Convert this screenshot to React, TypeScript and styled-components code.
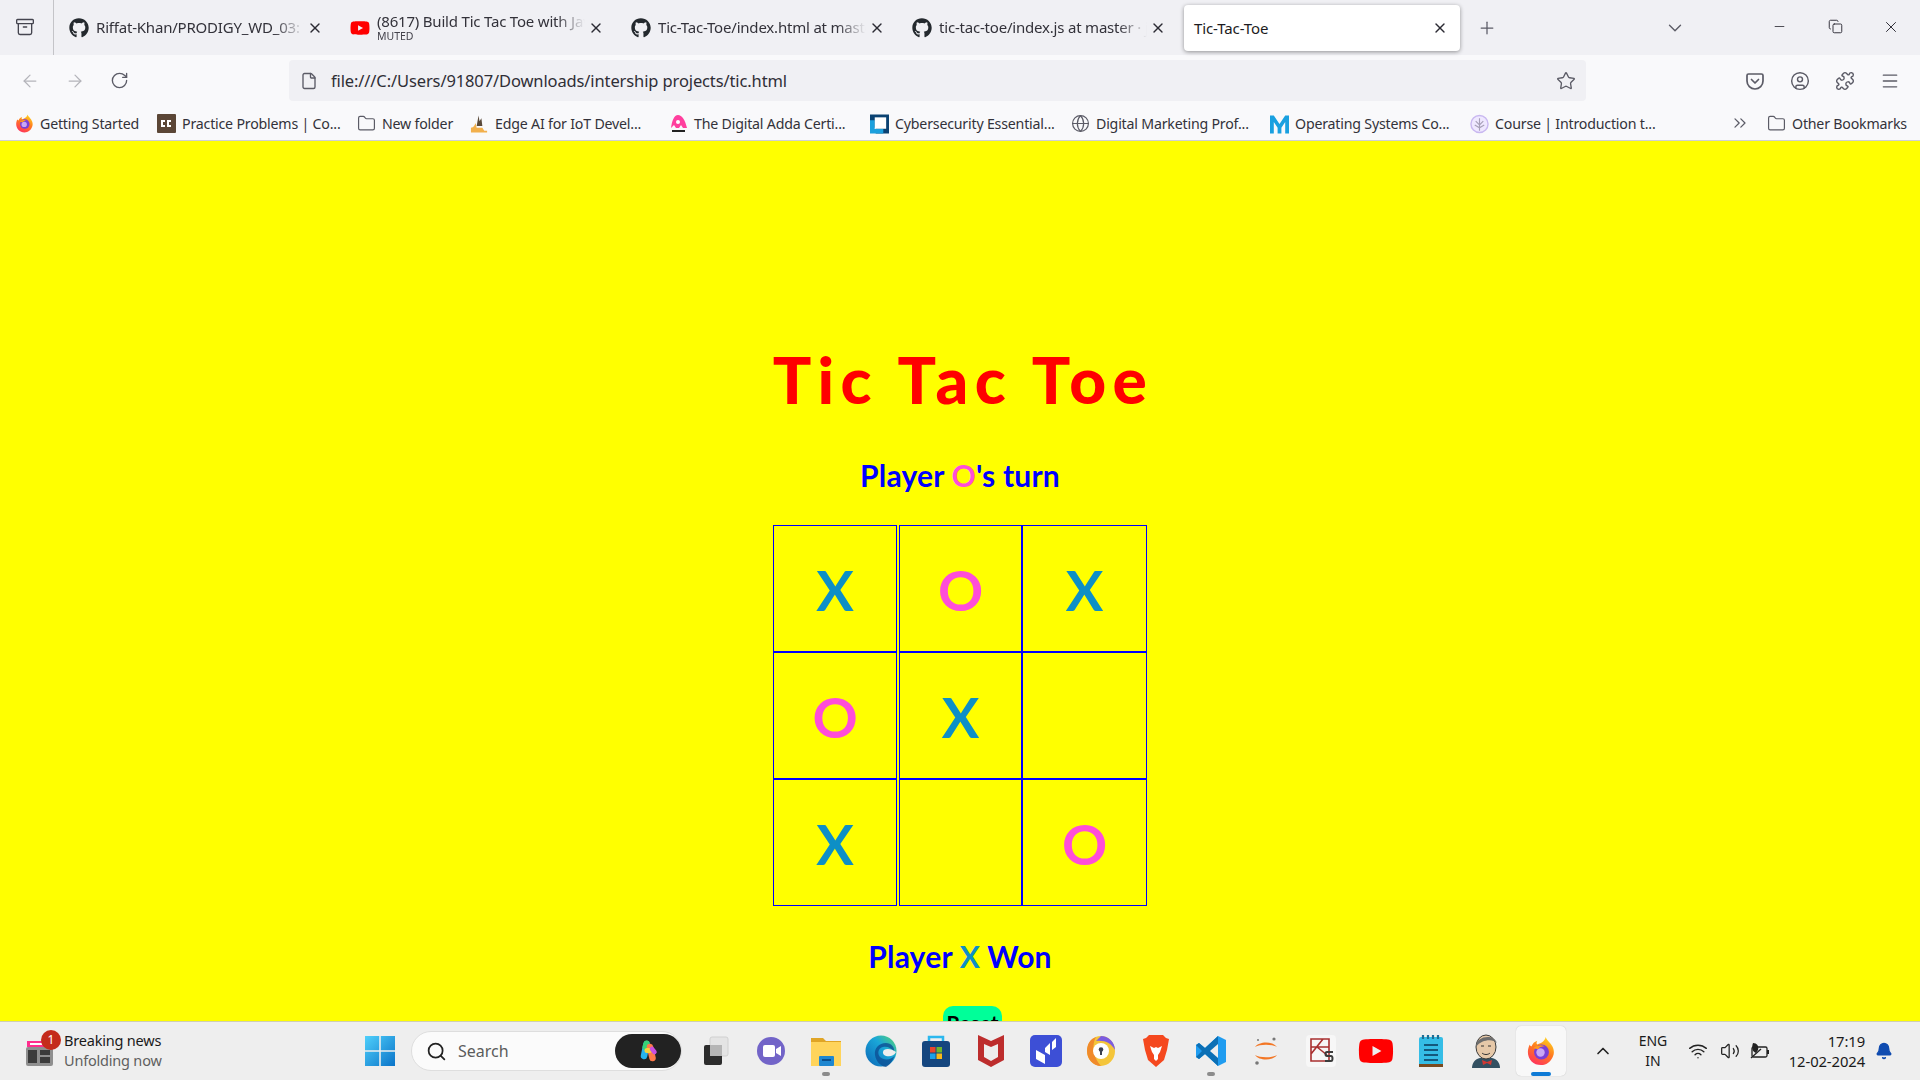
import React from "react";
import styled, { createGlobalStyle } from "styled-components";
import {
  Archive, ArrowLeft, ArrowRight, Bell, ChevronDown, ChevronUp, ChevronsRight, CircleUser, Copy, File,
  Folder, Globe, Menu, Minus, Plus, Puzzle, RotateCw, Search, Star, Volume2, Wifi, X,
} from "lucide-react";
import { FaGithub, FaYoutube } from "react-icons/fa";

const Global = createGlobalStyle`
  html, body { margin: 0; padding: 0; height: 100%; overflow: hidden; }
  body { font-family: "Noto Sans", "Liberation Sans", sans-serif; }
  * { box-sizing: border-box; }
`;

const Screen = styled.div`
  width: 1920px; height: 1080px; display: flex; flex-direction: column; overflow: hidden; background: #ffff00;
`;

/* ---------- tab strip ---------- */
const TabStrip = styled.div`
  height: 55px; flex: none; display: flex; align-items: stretch; background: #f0f0f4; color: #1c1b22;
`;
const ViewButton = styled.div`
  width: 54px; flex: none; display: flex; align-items: center; justify-content: center;
  border-right: 1px solid #c4c4c8; color: #45454f; padding: 0 4px 2px 0;
`;
const Tabs = styled.div`
  display: flex; margin-left: 6px; align-items: flex-start;
`;
const Tab = styled.div<{ $active?: boolean }>`
  width: 281px; height: 46px; margin-top: 5px; flex: none; display: flex; align-items: center; position: relative;
  padding-left: ${(p) => (p.$active ? 10 : 9)}px;
  ${(p) =>
    p.$active
      ? `background:#fff;border-radius:4px;box-shadow:0 1px 4px rgba(0,0,0,.4);width:276px;`
      : ``}
`;
const TabIcon = styled.span`
  width: 20px; height: 20px; flex: none; margin-right: 7px; display: flex; color: #24292e;
`;
const TabText = styled.div`
  width: 208px; flex: none; display: flex; flex-direction: column; white-space: nowrap; overflow: hidden;
  font: 15px/18px "Noto Sans", sans-serif; letter-spacing: -0.2px; color: #33323a; padding-bottom: 2px;
  -webkit-mask-image: linear-gradient(to right, #000 86%, transparent 100%);
  mask-image: linear-gradient(to right, #000 86%, transparent 100%);
`;
const TabPlain = styled.div`
  width: 235px; flex: none; font: 15px/18px "Noto Sans", sans-serif; letter-spacing: -0.1px; color: #1c1b22;
`;
const Muted = styled.span`
  font-size: 10.5px; line-height: 12px; letter-spacing: 0; color: #44434c;
`;
const TabClose = styled.span`
  width: 16px; flex: none; display: flex; margin-left: 3px; color: #2b2a33;
`;
const NewTab = styled.div`
  width: 54px; flex: none; display: flex; align-items: center; justify-content: center; color: #5b5b66; margin-left: 0;
`;
const StripFill = styled.div`
  flex: 1; display: flex; align-items: center; padding-left: 150px; color: #5b5b66;
`;
const WinButtons = styled.div`
  display: flex; align-items: center; width: 169px; flex: none; color: #2b2a33; padding-left: 0; padding-bottom: 2px;
`;
const WinBtn = styled.span`
  width: 56px; display: flex; justify-content: center;
`;

/* ---------- nav ---------- */
const NavBar = styled.div`
  height: 55px; flex: none; display: flex; align-items: center; background: #f9f9fb; color: #5b5b66; padding-bottom: 4px;
`;
const NavBtn = styled.span<{ $dim?: boolean }>`
  width: 45px; display: flex; justify-content: center; color: ${(p) => (p.$dim ? "#b4b4ba" : "#5b5b66")};
`;
const NavButtons = styled.div`
  display: flex; width: 289px; flex: none; padding-left: 7px;
`;
const UrlBar = styled.div`
  width: 1297px; height: 41px; flex: none; background: #f0f0f4; border-radius: 4px;
  display: flex; align-items: center; padding: 0 10px 0 11px; color: #5b5b66;
`;
const UrlText = styled.span`
  flex: 1; margin-left: 13px; font: 16.5px "Noto Sans", sans-serif; letter-spacing: -0.12px; color: #2f2e36;
`;
const Toolbar = styled.div`
  flex: 1; display: flex; padding-left: 146px; gap: 0;
`;
const ToolBtn = styled.span`
  width: 45px; display: flex; justify-content: center; color: #5b5b66;
`;

/* ---------- bookmarks ---------- */
const Bookmarks = styled.div`
  height: 31px; flex: none; display: flex; align-items: center; background: #f9f9fb; border-bottom: 1px solid #cfcfd4;
  padding: 0 0 4px 15px; color: #3a3942; position: relative;
`;
const Bookmark = styled.div<{ $w: number }>`
  width: ${(p) => p.$w}px; flex: none; display: flex; align-items: center; white-space: nowrap; color: #33323a;
  font: 14.2px "Noto Sans", sans-serif; letter-spacing: -0.2px;
`;
const BmIcon = styled.span`
  width: 19px; height: 19px; flex: none; display: flex; margin-right: 6px; color: #5b5b66;
`;
const BmChevron = styled.span`
  width: 28px; flex: none; display: flex; justify-content: center; color: #5b5b66; margin: 0 13px 0 73px;
`;

/* ---------- page ---------- */
const Page = styled.main`
  flex: 1; min-height: 0; overflow: hidden; background: #ffff00; display: flex; flex-direction: column; align-items: center;
  font-family: Lato, sans-serif;
`;
const Title = styled.h1`
  margin: 199px 0 0; height: 80px; padding-left: 6px; font: 900 64px/80px Lato, sans-serif; letter-spacing: 6.4px; color: #ff0000;
`;
const Status = styled.h2`
  margin: 0; font: 700 30px/40px Lato, sans-serif; letter-spacing: 0.2px; color: #0000ff;
`;
const Turn = styled(Status)`
  margin-top: 35px;
`;
const Won = styled(Status)`
  margin-top: 30px;
`;
const Mark = styled.span<{ $v: string }>`
  color: ${(p) => (p.$v === "X" ? "#0d8fc6" : "#ff4dd8")};
`;
const Board = styled.div`
  width: 374px; margin-top: 30px; display: grid; grid-template-columns: 126px 123px 125px; grid-auto-rows: 127px;
`;
const Cell = styled.div`
  border: 1px solid #0000ff; display: flex; align-items: center; justify-content: center;
  font: 700 56px/1 Lato, sans-serif; padding-top: 3px;
  &:nth-child(3n + 1) { margin-right: 2px; }
`;
const Reset = styled.button`
  flex: none; margin: 30px 0 0 25px; width: 59px; height: 34px; padding: 0; border: 0; border-radius: 10px; background: #00ff99;
  color: #000; font: 700 21px/34px Lato, sans-serif;
`;

/* ---------- taskbar ---------- */
const Taskbar = styled.footer`
  height: 59px; flex: none; display: flex; align-items: center; background: #eeeeee; border-top: 1px solid #cfcfb0;
`;
const News = styled.div`
  width: 365px; flex: none; display: flex; align-items: center; padding-left: 24px;
`;
const NewsIcon = styled.div`
  width: 32px; height: 36px; flex: none; position: relative; margin-right: 8px;
`;
const Badge = styled.span`
  position: absolute; top: -3px; right: -5px; width: 20px; height: 20px; border-radius: 50%; background: #c42b1c; color: #fff;
  font: 12px/20px "Noto Sans", sans-serif; text-align: center;
`;
const NewsText = styled.div`
  display: flex; flex-direction: column; font: 14.5px/20px "Noto Sans", sans-serif; letter-spacing: -0.2px; color: #1a1a1a;
  padding-bottom: 2px;
`;
const NewsSub = styled.span`
  color: #5f5f5f;
`;
const AppSlot = styled.div<{ $active?: boolean }>`
  width: 55px; height: 50px; flex: none; display: flex; align-items: center; justify-content: center; position: relative;
  ${(p) => p.$active && `background:#f8f8f8;border-radius:5px;box-shadow:0 0 1px rgba(0,0,0,.25);width:50px;margin:0 2.5px;`}
`;
const Running = styled.span<{ $active?: boolean }>`
  position: absolute; bottom: 0; left: 50%; transform: translateX(-50%);
  width: ${(p) => (p.$active ? 20 : 8)}px; height: 4px; border-radius: 2px; background: ${(p) => (p.$active ? "#0f7bd6" : "#8c8c8c")};
`;
const SearchBox = styled.div`
  width: 271px; height: 40px; flex: none; margin-left: 16px; border-radius: 20px; background: #fbfbfb; border: 1px solid #dedede;
  display: flex; align-items: center; padding-left: 14px; color: #222;
`;
const SearchText = styled.span`
  flex: 1; margin-left: 11px; font: 16px "Noto Sans", sans-serif; color: #5c5c5c;
`;
const Copilot = styled.span`
  width: 66px; height: 34px; flex: none; border-radius: 17px; background: #222; display: flex; align-items: center; justify-content: center;
`;
const Apps = styled.div`
  display: flex; align-items: center; margin-left: 6px;
`;
const Tray = styled.div`
  flex: 1; display: flex; align-items: center; color: #222;
`;
const TrayBtn = styled.span<{ $w: number; $pad?: number }>`
  width: ${(p) => p.$w}px; flex: none; display: flex; justify-content: center; padding-left: ${(p) => p.$pad ?? 0}px;
`;
const Lang = styled.div`
  width: 46px; margin-right: 5px; flex: none; text-align: center; font: 14px/20px "Noto Sans", sans-serif; color: #1a1a1a;
`;
const Clock = styled.div`
  width: 90px; flex: none; text-align: right; font: 14.8px/20px "Noto Sans", sans-serif; color: #1a1a1a;
  letter-spacing: -0.1px;
`;

/* ---------- drawings ---------- */
const FirefoxLogo = ({ size }: { size: number }) => (
  <svg width={size} height={size} viewBox="0 0 32 32">
    <defs>
      <linearGradient id="ffa" x1="0.7" y1="0" x2="0.2" y2="1">
        <stop offset="0" stopColor="#ffd21f" />
        <stop offset="0.45" stopColor="#ff7a1f" />
        <stop offset="1" stopColor="#ff2d62" />
      </linearGradient>
    </defs>
    <path d="M21 1c1 4 6 6 8 12 1 3 1 6 0 8-2 6-7 10-13 10C8 31 2 25 2 17c0-3 1-6 2-8 0 1 1 2 2 2 1-3 3-5 6-6-1 2-1 3 0 4 3-1 8-3 9-8z" fill="url(#ffa)" />
    <circle cx="16.5" cy="17" r="8" fill="#7a3fd6" />
    <circle cx="15.5" cy="17.5" r="4.5" fill="#c9a7f5" />
    <path d="M8 13c3-3 8-4 12-2-3 0-6 1-7 3l-5-1z" fill="#ff9a1f" />
  </svg>
);
const Svg = styled.svg`
  display: block;
`;
const PocketIcon = () => (
  <Svg width="20" height="20" viewBox="0 0 20 20">
    <path d="M3.5 3h13A1.5 1.5 0 0 1 18 4.5V10a8 8 0 0 1-16 0V4.5A1.5 1.5 0 0 1 3.5 3z" fill="none" stroke="#5b5b66" strokeWidth="1.7" />
    <path d="M6.5 8.5L10 12l3.5-3.5" fill="none" stroke="#5b5b66" strokeWidth="1.7" strokeLinecap="round" strokeLinejoin="round" />
  </Svg>
);
const CcLogo = () => (
  <Svg width="19" height="19" viewBox="0 0 19 19">
    <rect width="19" height="19" rx="1" fill="#5b4636" />
    <path d="M8 7H5v5h3M14 7h-3v5h3" fill="none" stroke="#fff" strokeWidth="2" />
  </Svg>
);
const EdgeAiLogo = () => (
  <Svg width="20" height="20" viewBox="0 0 20 20">
    <path d="M9 1l1 6 2-3 1 8h-6z" fill="#5a4a3a" />
    <path d="M1 14c3 0 4-3 5-5l1 5h6l2 3h3v2H1z" fill="#f2b04c" />
  </Svg>
);
const AddaLogo = () => (
  <Svg width="19" height="19" viewBox="0 0 19 19">
    <path d="M9 1c4 0 7 5 9 13h-4l-2-3-2 3h-3l-2-3-3 3c1-7 3-13 7-13z" fill="#ff3f9e" />
    <circle cx="9" cy="8" r="2" fill="#fff" />
    <rect x="3" y="16" width="13" height="2" fill="#222" />
  </Svg>
);
const CyberLogo = () => (
  <Svg width="20" height="20" viewBox="0 0 20 20">
    <path d="M0 0h20v20H6v-6H0z" fill="#0b4272" />
    <path d="M0 6h5v9h9v5H0z" fill="#1ca0dd" />
    <rect x="5" y="3" width="12" height="12" fill="#fff" />
  </Svg>
);
const MLogo = () => (
  <Svg width="20" height="20" viewBox="0 0 20 20">
    <path d="M0 20V1h4l6 9 6-9h4v19h-4V8l-4 6V20H8v-6L4 8v12z" fill="#19a0e0" />
  </Svg>
);
const CourseLogo = () => (
  <Svg width="20" height="20" viewBox="0 0 20 20">
    <circle cx="10" cy="10" r="9" fill="#efe8ff" stroke="#c9b8f0" strokeWidth="1.5" />
    <path d="M10 4v13M6 7l4 4 4-4M5 11l5 3 5-3" stroke="#a7a0b8" fill="none" strokeWidth="1.2" />
  </Svg>
);
const NewsGlyph = () => (
  <Svg width="32" height="36" viewBox="0 0 32 36">
    <path d="M3 8h24v6H3z" fill="#ff2e8e" />
    <rect x="6" y="10" width="12" height="2" fill="#fff" />
    <rect x="2" y="14" width="27" height="19" rx="2" fill="#8f8f8f" />
    <rect x="4" y="17" width="9" height="13" fill="#3b3b3b" />
    <rect x="16" y="17" width="10" height="5" fill="#3b3b3b" />
    <rect x="16" y="24" width="10" height="6" fill="#3b3b3b" />
  </Svg>
);
const WinLogo = () => (
  <Svg width="30" height="30" viewBox="0 0 30 30">
    <defs>
      <linearGradient id="win" x1="0" y1="0" x2="1" y2="1">
        <stop offset="0" stopColor="#4fd0fb" />
        <stop offset="1" stopColor="#0a73c8" />
      </linearGradient>
    </defs>
    <path d="M0 0h14.2v14.2H0zM15.8 0H30v14.2H15.8zM0 15.8h14.2V30H0zM15.8 15.8H30V30H15.8z" fill="url(#win)" />
  </Svg>
);
const CopilotGlyph = () => (
  <Svg width="24" height="24" viewBox="0 0 24 24">
    <path d="M10.5 5L8 17" stroke="#27b4ef" strokeWidth="6.5" strokeLinecap="round" />
    <path d="M10.5 4.5L9.5 8" stroke="#36d277" strokeWidth="6" strokeLinecap="round" />
    <path d="M14 8l2.5 11" stroke="#ff7a4a" strokeWidth="6.5" strokeLinecap="round" />
    <path d="M11 11.5l2.5 0" stroke="#f5d33c" strokeWidth="5" strokeLinecap="round" />
    <path d="M16 10l2.5 3" stroke="#c94fe0" strokeWidth="4.5" strokeLinecap="round" />
  </Svg>
);
const TaskView = () => (
  <Svg width="30" height="30" viewBox="0 0 30 30">
    <rect x="9" y="1" width="18" height="19" rx="2" fill="#e4e4e4" stroke="#d0d0d0" />
    <rect x="3" y="9" width="18" height="20" rx="2" fill="#2c2c2c" />
    <rect x="9" y="9" width="12" height="11" fill="#b5b5b5" />
  </Svg>
);
const MeetLogo = () => (
  <Svg width="30" height="30" viewBox="0 0 30 30">
    <circle cx="15" cy="15" r="14" fill="#7264c8" />
    <rect x="7" y="9" width="12" height="12" rx="2" fill="#fff" />
    <path d="M20 13l5-3v10l-5-3z" fill="#fff" />
  </Svg>
);
const ExplorerLogo = () => (
  <Svg width="32" height="32" viewBox="0 0 32 32">
    <path d="M1 3h12l3 3h15v6H1z" fill="#e0a526" />
    <rect x="1" y="7" width="30" height="24" fill="#ffd45b" />
    <rect x="9" y="21" width="15" height="10" rx="1" fill="#1f87d0" />
    <rect x="12" y="24" width="9" height="2" fill="#0b4f8c" />
  </Svg>
);
const EdgeLogo = () => (
  <Svg width="32" height="32" viewBox="0 0 32 32">
    <defs>
      <linearGradient id="edg" x1="0" y1="1" x2="1" y2="0">
        <stop offset="0" stopColor="#0b66b6" />
        <stop offset="0.6" stopColor="#1aa7d8" />
        <stop offset="1" stopColor="#5ad66f" />
      </linearGradient>
    </defs>
    <circle cx="16" cy="16" r="15.5" fill="url(#edg)" />
    <path d="M30 20c-3 5-11 6-15 2-3-3-2-9 3-10 4-1 9 1 11 5 1-5-3-9-8-9-7 0-12 5-11 12 1 6 5 11 11 12 4-2 7-7 9-12z" fill="#0c4f95" opacity=".8" />
    <path d="M31 17c-2 4-6 5-10 4-3-1-4-4-2-6 3-2 8-1 12 2z" fill="#eeeeee" />
  </Svg>
);
const StoreLogo = () => (
  <Svg width="30" height="32" viewBox="0 0 30 32">
    <path d="M8 7V2h14v5" fill="none" stroke="#2bb8ee" strokeWidth="2.5" />
    <rect x="1" y="6" width="28" height="26" rx="3" fill="#14467f" />
    <rect x="9" y="12" width="5.5" height="5.5" fill="#e8452c" />
    <rect x="15.5" y="12" width="5.5" height="5.5" fill="#6fb52b" />
    <rect x="9" y="18.5" width="5.5" height="5.5" fill="#1ca0e8" />
    <rect x="15.5" y="18.5" width="5.5" height="5.5" fill="#f8b918" />
  </Svg>
);
const McafeeLogo = () => (
  <Svg width="28" height="34" viewBox="0 0 28 34">
    <path d="M1 1l13 6 13-6v25l-13 7-13-7zM7 10v13l7 4 7-4V10l-7 3z" fill="#bd2d2d" fillRule="evenodd" />
  </Svg>
);
const LinearLogo = () => (
  <Svg width="32" height="32" viewBox="0 0 32 32">
    <rect width="32" height="32" rx="5" fill="#3d4fd6" />
    <path d="M6 15l9 5v9l-9-5z" fill="#fff" />
    <path d="M15 13l5-5v12l-5-3zM22 7l4-4v9l-4 3z" fill="#fff" />
  </Svg>
);
const AvastLogo = () => (
  <Svg width="30" height="32" viewBox="0 0 30 32">
    <ellipse cx="15" cy="16" rx="14" ry="15" fill="#f4c53a" />
    <path d="M15 1c7 0 14 6 14 14-4-7-10-10-19-9z" fill="#7c5ce0" />
    <path d="M1 16C1 9 4 4 10 2c-4 7-4 19 5 29C7 31 1 24 1 16z" fill="#f08a2b" />
    <circle cx="15" cy="16" r="8" fill="#fff" />
    <circle cx="15" cy="14.5" r="2.3" fill="#3a3f50" />
    <rect x="14" y="15" width="2" height="5" fill="#3a3f50" />
  </Svg>
);
const BraveLogo = () => (
  <Svg width="28" height="34" viewBox="0 0 28 34">
    <path d="M7 1h14l3 3 3 1-2 11-3 10-8 7-8-7-3-10L1 5l3-1z" fill="#f5481e" />
    <path d="M8 12l4 2 2-1 2 1 4-2-2 6-2 3v4l-2 2-2-2v-4l-2-3z" fill="#fff" />
  </Svg>
);
const VsCodeLogo = () => (
  <Svg width="32" height="32" viewBox="0 0 32 32">
    <path d="M23 1l8 4v22l-8 4-13-12-6 5-3-2v-12l3-2 6 5z" fill="#1f9cf0" />
    <path d="M23 1L10 13 4 8 1 10l6 6-6 6 3 2 6-5 13 12z" fill="#0b6fb5" />
    <path d="M23 9v14l-8-7z" fill="#eeeeee" />
  </Svg>
);
const JupyterLogo = () => (
  <Svg width="30" height="32" viewBox="0 0 30 32">
    <path d="M4 12c4-6 18-6 22 0-5-3-17-3-22 0zM4 20c5 3 17 3 22 0-4 6-18 6-22 0z" fill="#f37726" />
    <circle cx="23" cy="4" r="1.6" fill="#777" />
    <circle cx="7" cy="5" r="1" fill="#777" />
    <circle cx="6" cy="28" r="1.8" fill="#777" />
  </Svg>
);
const KsLogo = () => (
  <Svg width="30" height="32" viewBox="0 0 30 32">
    <rect width="30" height="32" rx="4" fill="#f7f7f7" />
    <path d="M5 4h18v22H5zM5 12h18M5 19l12-15M11 12l10 8" fill="none" stroke="#a93030" strokeWidth="1.6" />
    <path d="M27 17h-6c-2 0-2 4 0 4h4c2 0 2 5 0 5h-6" fill="none" stroke="#3c3c3c" strokeWidth="2" />
  </Svg>
);
const NotepadLogo = () => (
  <Svg width="26" height="34" viewBox="0 0 26 34">
    <rect x="1" y="3" width="24" height="29" rx="2" fill="#35bde6" />
    <rect x="1" y="30" width="24" height="3" fill="#7a4a1f" />
    <path d="M5 1v4M10 1v4M15 1v4M20 1v4" stroke="#1d6f96" strokeWidth="2.2" />
    <path d="M6 11h14M6 16h14M6 21h14M6 26h14" stroke="#14587c" strokeWidth="2" />
  </Svg>
);
const JenkinsLogo = () => (
  <Svg width="30" height="34" viewBox="0 0 30 34">
    <path d="M1 34c0-5 3-9 8-10l12 0c5 1 8 5 8 10z" fill="#335061" />
    <ellipse cx="15" cy="13" rx="10" ry="12" fill="#e6c8a8" stroke="#3a3a3a" />
    <path d="M5 13C4 2 23-1 26 9c-4-4-15-4-21 4z" fill="#6d6d6d" />
    <path d="M11 26l5 2 5-2-1 5-4-2-4 2z" fill="#d33833" />
    <path d="M10 12h3M17 12h3M11 19c2 2 6 2 8 0" stroke="#333" fill="none" />
  </Svg>
);
const BatteryGlyph = () => (
  <Svg width="22" height="20" viewBox="0 0 22 20">
    <rect x="3" y="6" width="15" height="10" rx="1.5" fill="none" stroke="#222" strokeWidth="1.3" />
    <rect x="18" y="9" width="2" height="4" fill="#222" />
    <path d="M4 2c4 0 6 3 5 7l-2 3c-3-1-5-4-3-10z" fill="#222" />
    <path d="M2 17L12 8" stroke="#222" strokeWidth="1.3" />
  </Svg>
);

const board = ["X", "O", "X", "O", "X", "", "X", "", "O"];
const stroke = 1.6;

export default function App() {
  return (
    <Screen>
      <Global />
      <TabStrip>
        <ViewButton><Archive size={20} strokeWidth={stroke} /></ViewButton>
        <Tabs>
          <Tab>
            <TabIcon><FaGithub size={20} /></TabIcon>
            <TabText>Riffat-Khan/PRODIGY_WD_03: T</TabText>
            <TabClose><X size={16} /></TabClose>
          </Tab>
          <Tab>
            <TabIcon><FaYoutube size={20} color="#ff0000" /></TabIcon>
            <TabText>
              (8617) Build Tic Tac Toe with Jav
              <Muted>MUTED</Muted>
            </TabText>
            <TabClose><X size={16} /></TabClose>
          </Tab>
          <Tab>
            <TabIcon><FaGithub size={20} /></TabIcon>
            <TabText>Tic-Tac-Toe/index.html at maste</TabText>
            <TabClose><X size={16} /></TabClose>
          </Tab>
          <Tab>
            <TabIcon><FaGithub size={20} /></TabIcon>
            <TabText>tic-tac-toe/index.js at master · ja</TabText>
            <TabClose><X size={16} /></TabClose>
          </Tab>
          <Tab $active>
            <TabPlain>Tic-Tac-Toe</TabPlain>
            <TabClose><X size={16} /></TabClose>
          </Tab>
        </Tabs>
        <NewTab><Plus size={20} strokeWidth={1.5} /></NewTab>
        <StripFill><ChevronDown size={22} strokeWidth={1.5} /></StripFill>
        <WinButtons>
          <WinBtn><Minus size={15} strokeWidth={1.3} /></WinBtn>
          <WinBtn><Copy size={15} strokeWidth={1.5} /></WinBtn>
          <WinBtn><X size={18} strokeWidth={1.3} /></WinBtn>
        </WinButtons>
      </TabStrip>
      <NavBar>
        <NavButtons>
          <NavBtn $dim><ArrowLeft size={20} strokeWidth={1.5} /></NavBtn>
          <NavBtn $dim><ArrowRight size={20} strokeWidth={1.5} /></NavBtn>
          <NavBtn><RotateCw size={19} strokeWidth={1.7} /></NavBtn>
        </NavButtons>
        <UrlBar>
          <File size={18} strokeWidth={1.8} />
          <UrlText>file:///C:/Users/91807/Downloads/intership projects/tic.html</UrlText>
          <Star size={20} strokeWidth={1.6} />
        </UrlBar>
        <Toolbar>
          <ToolBtn><PocketIcon /></ToolBtn>
          <ToolBtn><CircleUser size={20} strokeWidth={1.7} /></ToolBtn>
          <ToolBtn><Puzzle size={20} strokeWidth={1.7} /></ToolBtn>
          <ToolBtn><Menu size={20} strokeWidth={1.6} /></ToolBtn>
        </Toolbar>
      </NavBar>
      <Bookmarks>
        <Bookmark $w={142}><BmIcon><FirefoxLogo size={19} /></BmIcon>Getting Started</Bookmark>
        <Bookmark $w={200}><BmIcon><CcLogo /></BmIcon>Practice Problems | Co...</Bookmark>
        <Bookmark $w={113}><BmIcon><Folder size={19} strokeWidth={1.5} /></BmIcon>New folder</Bookmark>
        <Bookmark $w={199}><BmIcon><EdgeAiLogo /></BmIcon>Edge AI for IoT Devel...</Bookmark>
        <Bookmark $w={201}><BmIcon><AddaLogo /></BmIcon>The Digital Adda Certi...</Bookmark>
        <Bookmark $w={201}><BmIcon><CyberLogo /></BmIcon>Cybersecurity Essential...</Bookmark>
        <Bookmark $w={199}><BmIcon><Globe size={19} strokeWidth={1.5} /></BmIcon>Digital Marketing Prof...</Bookmark>
        <Bookmark $w={200}><BmIcon><MLogo /></BmIcon>Operating Systems Co...</Bookmark>
        <Bookmark $w={183}><BmIcon><CourseLogo /></BmIcon>Course | Introduction t...</Bookmark>
        <BmChevron><ChevronsRight size={20} strokeWidth={1.5} /></BmChevron>
        <Bookmark $w={150}><BmIcon><Folder size={19} strokeWidth={1.5} /></BmIcon>Other Bookmarks</Bookmark>
      </Bookmarks>
      <Page>
        <Title>Tic Tac Toe</Title>
        <Turn>Player <Mark $v="O">O</Mark>'s turn</Turn>
        <Board>
          {board.map((v, i) => (
            <Cell key={i}>{v && <Mark $v={v}>{v}</Mark>}</Cell>
          ))}
        </Board>
        <Won>Player <Mark $v="X">X</Mark> Won</Won>
        <Reset>Reset</Reset>
      </Page>
      <Taskbar>
        <News>
          <NewsIcon>
            <NewsGlyph />
            <Badge>1</Badge>
          </NewsIcon>
          <NewsText>
            Breaking news
            <NewsSub>Unfolding now</NewsSub>
          </NewsText>
        </News>
        <WinLogo />
        <SearchBox>
          <Search size={21} strokeWidth={2} />
          <SearchText>Search</SearchText>
          <Copilot><CopilotGlyph /></Copilot>
        </SearchBox>
        <Apps>
          <AppSlot><TaskView /></AppSlot>
          <AppSlot><MeetLogo /></AppSlot>
          <AppSlot><ExplorerLogo /><Running /></AppSlot>
          <AppSlot><EdgeLogo /></AppSlot>
          <AppSlot><StoreLogo /></AppSlot>
          <AppSlot><McafeeLogo /></AppSlot>
          <AppSlot><LinearLogo /></AppSlot>
          <AppSlot><AvastLogo /></AppSlot>
          <AppSlot><BraveLogo /></AppSlot>
          <AppSlot><VsCodeLogo /><Running /></AppSlot>
          <AppSlot><JupyterLogo /></AppSlot>
          <AppSlot><KsLogo /></AppSlot>
          <AppSlot><FaYoutube size={36} color="#ff0000" /></AppSlot>
          <AppSlot><NotepadLogo /></AppSlot>
          <AppSlot><JenkinsLogo /></AppSlot>
          <AppSlot $active><FirefoxLogo size={30} /><Running $active /></AppSlot>
        </Apps>
        <Tray>
          <TrayBtn $w={62} $pad={8}><ChevronUp size={20} strokeWidth={2} /></TrayBtn>
          <Lang>ENG<br />IN</Lang>
          <TrayBtn $w={34}><Wifi size={20} strokeWidth={1.7} /></TrayBtn>
          <TrayBtn $w={30}><Volume2 size={20} strokeWidth={1.5} /></TrayBtn>
          <TrayBtn $w={30}><BatteryGlyph /></TrayBtn>
          <Clock>17:19<br />12-02-2024</Clock>
          <TrayBtn $w={38}><Bell size={18} fill="#0f4bb0" color="#0f4bb0" /></TrayBtn>
        </Tray>
      </Taskbar>
    </Screen>
  );
}
